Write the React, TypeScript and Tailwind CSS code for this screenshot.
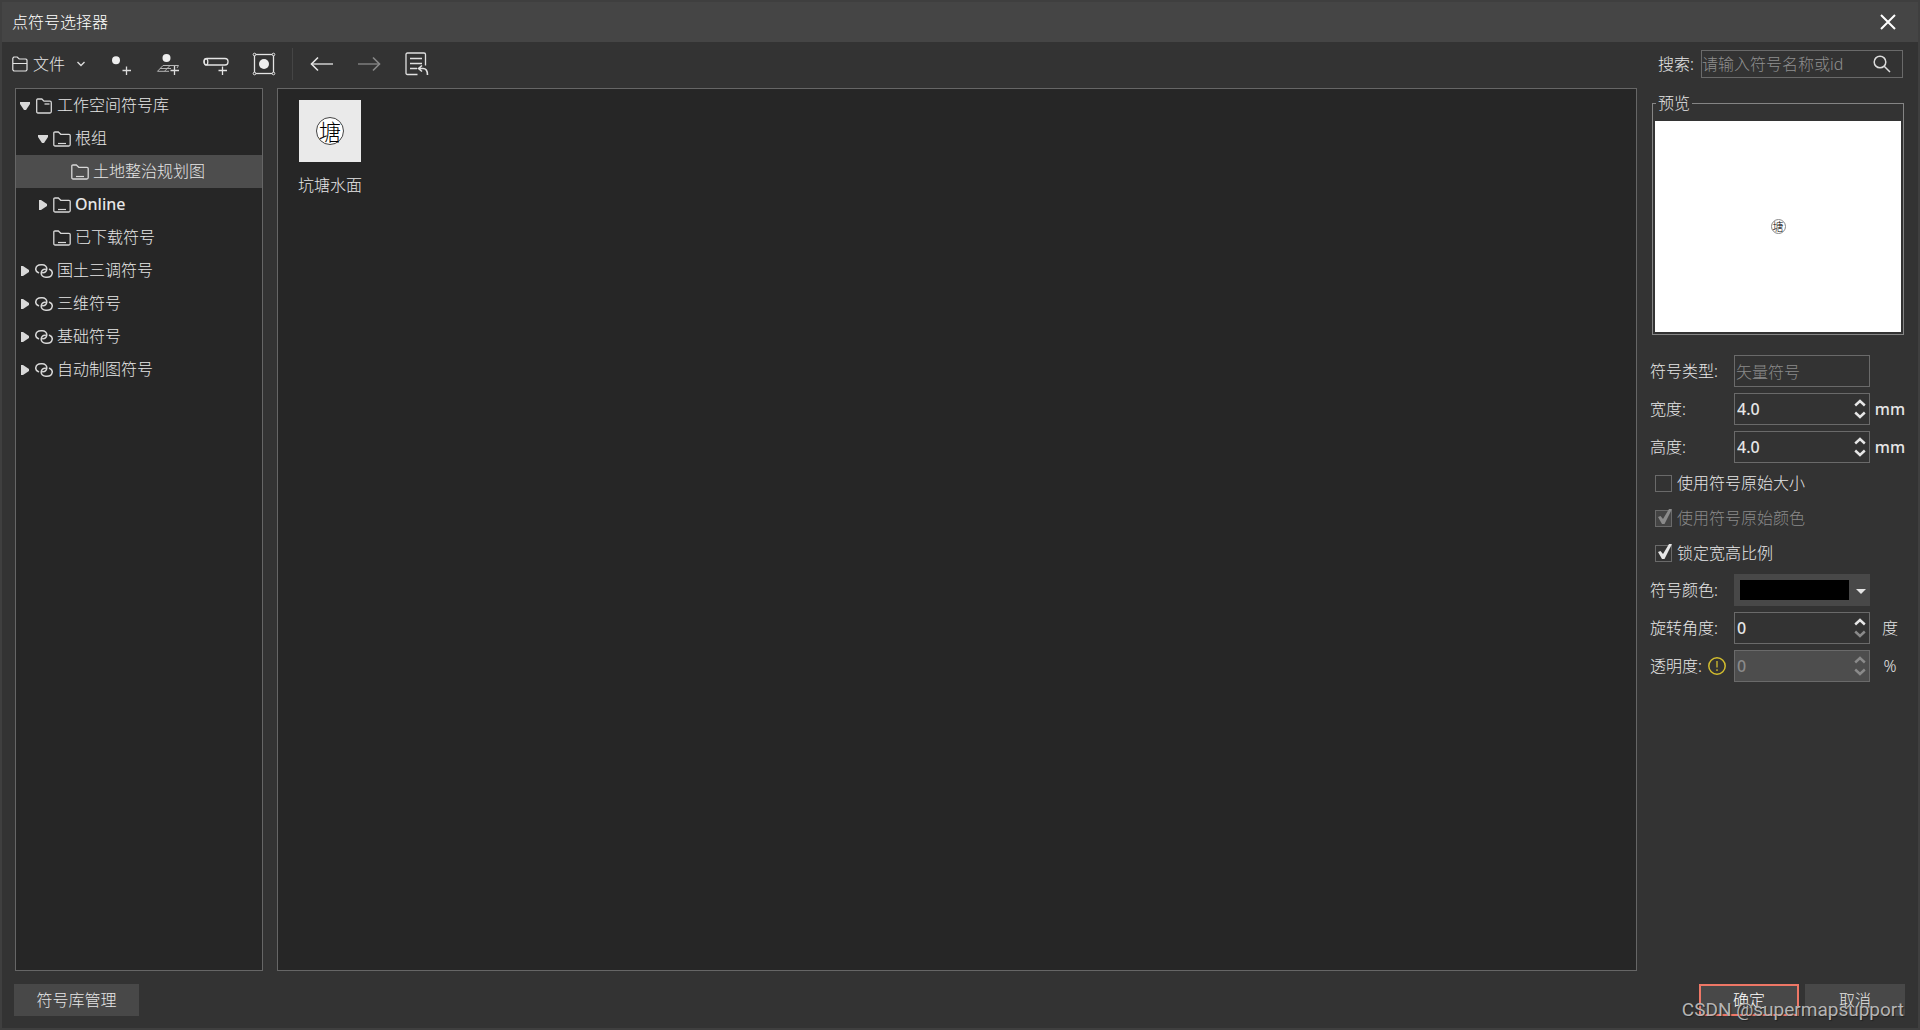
import * as React from "react";
import { cva } from "class-variance-authority";
import clsx from "clsx";

type IconProps = { className?: string };

// Icons
const FileMenuIcon = () => (
    <svg width="16" height="16" viewBox="0 0 16 16" fill="none" stroke="#e4e4e4" strokeWidth="1.2">
        <path d="M.8 13.8V2.2L1.8 1H5.2L7.2 3H14L15 4V13.8L14 15H1.8Z M1 7.5H15" />
    </svg>
);

const RootFolderIcon = () => (
    <svg width="16" height="16" viewBox="0 0 16 16" fill="none" stroke="#d8d8d8">
        <path d="M.7 13.5V2.2Q.7 1 1.7 1H5.8L8 3.2H14Q15.3 3.2 15.3 4.7V13.5Q15.3 15 14 15H2Q.7 15 .7 13.5Z" strokeWidth="1.3" />
        <path d="M8.5 6H13.5" strokeWidth="1.3" />
    </svg>
);

const FolderIcon = () => (
    <svg width="18" height="16" viewBox="0 0 18 16" fill="none" stroke="#d8d8d8">
        <path d="M.8 13.5V2.2Q.8 1 2 1H5.3L7.8 3.3H16Q17.2 3.3 17.2 4.5V13.5Q17.2 15 15.8 15H2.2Q.8 15 .8 13.5Z" strokeWidth="1.3" />
        <path d="M5 12.5H13" strokeWidth="1.2" />
    </svg>
);

const LinkIcon = () => (
    <svg width="18" height="14" viewBox="0 0 18 14" fill="none" stroke="#d8d8d8" strokeWidth="1.5" strokeLinecap="round">
        <path d="M3.5 8.8C1.5 8 .5 6.6 .8 4.7C1.2 2.2 3.4.8 6 .8H7.2C9.9.8 12 2.5 11.8 5C11.6 7.5 9.8 8.9 7.6 8.7" />
        <path d="M14.5 5.2C16.5 6 17.5 7.4 17.2 9.3C16.8 11.8 14.6 13.2 12 13.2H10.8C8.1 13.2 6 11.5 6.2 9C6.4 6.5 8.2 5.1 10.4 5.3" />
    </svg>
);

const PointAddIcon = () => (
    <svg width="28" height="28" viewBox="0 0 28 28" fill="none" stroke="#dcdcdc">
        <circle cx="10" cy="10.3" r="4" fill="#eee" stroke="none" />
        <path d="M16.5 20.5H25M20.5 16.5V25" strokeWidth="1.3" />
    </svg>
);

const Point3DAddIcon = () => (
    <svg width="28" height="28" viewBox="0 0 28 28" fill="none" stroke="#b4b4b4">
        <circle cx="12.5" cy="8" r="4" fill="#eee" stroke="none" />
        <path d="M9 15.5H24.5M3.5 21.3H15M9 15.5L3.5 21.3M16 15.5L10.5 21.3M6 18.5H17M24.5 15.5L23 18" />
        <path d="M16.5 20.5H25M20.5 16V25" stroke="#dcdcdc" strokeWidth="1.3" />
    </svg>
);

const PipeAddIcon = () => (
    <svg width="28" height="28" viewBox="0 0 28 28" fill="none" stroke="#e4e4e4" strokeWidth="1.3">
        <rect x="2" y="8.5" width="24" height="6.5" rx="3" />
        <ellipse cx="4" cy="11.8" rx="1.8" ry="3.2" />
        <path d="M16.5 20.5H25M20.5 16.5V25" />
    </svg>
);

const SymbolFrameIcon = () => (
    <svg width="28" height="28" viewBox="0 0 28 28" fill="#333" stroke="#e4e4e4">
        <rect x="4.5" y="4.5" width="19" height="19" strokeWidth="1.3" />
        <circle cx="14" cy="14" r="5" fill="#eee" stroke="none" />
        <circle cx="4.5" cy="4.5" r="1.3" />
        <circle cx="23.5" cy="4.5" r="1.3" />
        <circle cx="4.5" cy="23.5" r="1.3" />
        <circle cx="23.5" cy="23.5" r="1.3" />
    </svg>
);

const ArrowIcon = ({ className }: IconProps) => (
    <svg className={className} width="28" height="28" viewBox="0 0 28 28" fill="none" stroke="currentColor">
        <path d="M10 7.5L3.5 14L10 20.5" strokeWidth="1.6" />
        <path d="M3.5 14H25" strokeWidth="1.3" />
    </svg>
);

const HistoryListIcon = () => (
    <svg width="28" height="28" viewBox="0 0 28 28" fill="none" stroke="#e0e0e0" strokeWidth="1.3">
        <path d="M15.5 24.5H5.5Q4 24.5 4 23V4.5Q4 3 5.5 3H22Q23.5 3 23.5 4.5V15.5" />
        <path d="M8 8.5H20M8 13.5H20M8 18.5H15" />
        <path d="M20 15.5L16.5 18.5L20 21.5M16.5 18.5H21Q25.5 18.5 25.5 25" strokeWidth="1.6" />
    </svg>
);

const SearchIcon = () => (
    <svg width="18" height="18" viewBox="0 0 18 18" fill="none" stroke="#dcdcdc" strokeWidth="1.5">
        <circle cx="7" cy="7" r="5.8" />
        <path d="M11.2 11.2L17 17" />
    </svg>
);

const Chevron = ({ className }: IconProps) => (
    <svg className={className} width="12" height="8" viewBox="0 0 12 8" fill="none" stroke="currentColor" strokeWidth="2.4">
        <path d="M1.2 6.5L6 2L10.8 6.5" />
    </svg>
);

interface TreeItem {
    label: string;
    level: 0 | 1 | 2;
    icon: "root" | "folder" | "link";
    state?: "open" | "closed";
    selected?: boolean;
}

const treeItems: TreeItem[] = [
    { label: "工作空间符号库", level: 0, icon: "root", state: "open" },
    { label: "根组", level: 1, icon: "folder", state: "open" },
    { label: "土地整治规划图", level: 2, icon: "folder", selected: true },
    { label: "Online", level: 1, icon: "folder", state: "closed" },
    { label: "已下载符号", level: 1, icon: "folder" },
    { label: "国土三调符号", level: 0, icon: "link", state: "closed" },
    { label: "三维符号", level: 0, icon: "link", state: "closed" },
    { label: "基础符号", level: 0, icon: "link", state: "closed" },
    { label: "自动制图符号", level: 0, icon: "link", state: "closed" },
];

const treeIcons = {
    root: <RootFolderIcon />,
    folder: <FolderIcon />,
    link: <LinkIcon />,
};

const treeRow = cva("flex h-[33px] w-full items-center text-left", {
    variants: {
        level: { 0: "pl-1", 1: "pl-[22px]", 2: "pl-10" },
        selected: { true: "bg-[#4d4d4d]", false: "" },
    },
});

function TreeRow({ item }: { item: TreeItem }) {
    return (
        <li>
            <button className={treeRow({ level: item.level, selected: !!item.selected })}>
                <span className="flex w-2.5 justify-center text-[#d8d8d8]">
                    {item.state === "open" && (
                        <svg width="10" height="8" viewBox="0 0 10 8" fill="currentColor">
                            <path d="M0 0H10V2L6 8H4L0 2Z" />
                        </svg>
                    )}
                    {item.state === "closed" && (
                        <svg width="8" height="10" viewBox="0 0 8 10" fill="currentColor">
                            <path d="M0 0H2L8 4V6L2 10H0Z" />
                        </svg>
                    )}
                </span>
                <span className="ml-[5px] flex w-[18px] justify-center">{treeIcons[item.icon]}</span>
                <span className={clsx("ml-1 pb-0.5", item.label === "Online" && "font-medium")}>{item.label}</span>
            </button>
        </li>
    );
}

function Field({
    id,
    label,
    unit,
    warning,
    children,
}: {
    id: string;
    label: string;
    unit?: string;
    warning?: boolean;
    children: React.ReactNode;
}) {
    return (
        <div className="flex h-8 items-center">
            <label htmlFor={id} className="flex w-[84px] shrink-0 items-center gap-1.5">
                {label}
                {warning && (
                    <svg width="18" height="18" viewBox="0 0 18 18" fill="none" stroke="#d2bd2e" strokeWidth="1.5">
                        <circle cx="9" cy="9" r="8.2" />
                        <path d="M9 4V10.5M9 12.3V14" strokeWidth="1.3" />
                    </svg>
                )}
            </label>
            {children}
            <span className={clsx("ml-1 flex flex-1 justify-center", unit === "mm" && "font-medium")}>{unit}</span>
        </div>
    );
}

interface SpinBoxProps {
    id: string;
    defaultValue: string;
    disabled?: boolean;
    atMin?: boolean;
}

function SpinBox({ id, defaultValue, disabled, atMin }: SpinBoxProps) {
    return (
        <div
            className={clsx(
                "flex h-8 w-[136px] shrink-0 items-center border border-[#6a6a6a]",
                disabled ? "bg-[#4d4d4d] text-[#8a8a8a]" : "bg-[#333]"
            )}
        >
            <input
                id={id}
                type="text"
                defaultValue={defaultValue}
                disabled={disabled}
                className="w-0 flex-1 bg-transparent pl-0.5 font-medium outline-none"
            />
            <div className="mr-[3px] flex flex-col gap-1">
                <button aria-label="增加" disabled={disabled}>
                    <Chevron className="block" />
                </button>
                <button aria-label="减少" disabled={disabled || atMin} className={clsx(atMin && "text-[#8a8a8a]")}>
                    <Chevron className="block rotate-180" />
                </button>
            </div>
        </div>
    );
}

function CheckOption({
    label,
    checked,
    disabled,
}: {
    label: string;
    checked?: boolean;
    disabled?: boolean;
}) {
    return (
        <label className={clsx("flex h-[35px] items-center gap-[5px]", disabled && "text-[#8a8a8a]")}>
            <span className="relative h-[17px] w-[17px]">
                <input
                    type="checkbox"
                    defaultChecked={checked}
                    disabled={disabled}
                    className="peer block h-[17px] w-[17px] appearance-none border border-[#6a6a6a] disabled:bg-[#444]"
                />
                <svg
                    className="pointer-events-none absolute bottom-[3px] left-[3px] hidden peer-checked:block"
                    width="14"
                    height="15"
                    viewBox="0 0 14 15"
                    fill="currentColor"
                >
                    <path d="M0 8L2.5 7L5 10L11 0H14L6.5 15H4Z" />
                </svg>
            </span>
            <span className="pb-0.5">{label}</span>
        </label>
    );
}

export default function App() {
    return (
        <div className="relative flex h-screen flex-col border-2 border-[#3f3f3f] bg-[#333] font-['Noto_Sans','Noto_Sans_CJK_SC',sans-serif] text-base leading-5 font-light text-[#e6e6e6]">
            <header className="flex h-10 shrink-0 items-center justify-between bg-[#454545] pr-5 pl-2.5 text-white">
                <h1>点符号选择器</h1>
                <button aria-label="关闭">
                    <svg width="20" height="20" viewBox="0 0 20 20" stroke="#fff" strokeWidth="2">
                        <path d="M3 3L17 17M17 3L3 17" />
                    </svg>
                </button>
            </header>

            <div className="flex h-[46px] shrink-0 items-center justify-between pr-[15px] pb-0.5 pl-2.5">
                <div className="flex items-center">
                    <button className="flex items-center">
                        <FileMenuIcon />
                        <span className="ml-[5px]">文件</span>
                        <svg className="ml-[11px]" width="10" height="8" viewBox="0 0 10 8" fill="none" stroke="#dcdcdc" strokeWidth="1.4">
                            <path d="M1.5 2L5 5.5L8.5 2" />
                        </svg>
                    </button>
                    <div className="ml-5 flex items-center gap-5">
                        <button aria-label="新建二维点符号">
                            <PointAddIcon />
                        </button>
                        <button aria-label="新建三维点符号">
                            <Point3DAddIcon />
                        </button>
                        <button aria-label="新建管点符号">
                            <PipeAddIcon />
                        </button>
                        <button aria-label="编辑符号">
                            <SymbolFrameIcon />
                        </button>
                    </div>
                    <div className="mr-[15px] ml-3.5 h-8 w-px bg-[#454545]" />
                    <div className="flex items-center gap-[19px]">
                        <button aria-label="后退">
                            <ArrowIcon />
                        </button>
                        <button aria-label="前进" disabled>
                            <ArrowIcon className="rotate-180 text-[#888]" />
                        </button>
                        <button aria-label="历史记录">
                            <HistoryListIcon />
                        </button>
                    </div>
                </div>
                <div className="flex items-center gap-[7px]">
                    <label htmlFor="search">搜索:</label>
                    <div className="flex h-7 w-[202px] items-center border border-[#6a6a6a] pr-[11px]">
                        <input
                            id="search"
                            type="text"
                            placeholder="请输入符号名称或id"
                            className="w-0 flex-1 bg-transparent outline-none placeholder:text-[#8f8f8f]"
                        />
                        <button aria-label="搜索">
                            <SearchIcon />
                        </button>
                    </div>
                </div>
            </div>

            <main className="flex min-h-0 flex-1 pl-[13px]">
                <nav className="w-[248px] shrink-0 border border-[#666] bg-[#262626]">
                    <ul>
                        {treeItems.map((item) => (
                            <TreeRow key={item.label} item={item} />
                        ))}
                    </ul>
                </nav>

                <section className="ml-3.5 flex flex-1 items-start border border-[#666] bg-[#262626] px-5 py-[11px]">
                    <button className="flex flex-col items-center gap-[13px]">
                        <span className="flex h-[62px] w-[62px] items-center justify-center bg-[#eaeaea]">
                            <span className="flex h-7 w-7 items-center justify-center rounded-full border border-[#444] bg-white text-[22px] leading-7 text-black">
                                塘
                            </span>
                        </span>
                        <span>坑塘水面</span>
                    </button>
                </section>

                <aside className="w-[281px] shrink-0 pt-[5px] pr-3 pl-[13px]">
                    <fieldset className="mx-0.5 border border-[#858585] px-0.5 pt-2 pb-0.5">
                        <legend className="ml-px px-0.5">预览</legend>
                        <div className="flex h-[211px] items-center justify-center bg-white">
                            <span className="flex h-[15px] w-[15px] items-center justify-center rounded-full border border-[#888] text-[11px] text-black">
                                塘
                            </span>
                        </div>
                    </fieldset>

                    <div className="mt-5 flex flex-col gap-1.5">
                        <Field id="symbol-type" label="符号类型:">
                            <input
                                id="symbol-type"
                                type="text"
                                defaultValue="矢量符号"
                                disabled
                                className="h-8 w-[136px] shrink-0 border border-[#6a6a6a] bg-transparent pl-px text-[#8a8a8a]"
                            />
                        </Field>
                        <Field id="width" label="宽度:" unit="mm">
                            <SpinBox id="width" defaultValue="4.0" />
                        </Field>
                        <Field id="height" label="高度:" unit="mm">
                            <SpinBox id="height" defaultValue="4.0" />
                        </Field>
                    </div>

                    <div className="my-[3px] pl-[5px]">
                        <CheckOption label="使用符号原始大小" />
                        <CheckOption label="使用符号原始颜色" checked disabled />
                        <CheckOption label="锁定宽高比例" checked />
                    </div>

                    <div className="flex flex-col gap-1.5">
                        <Field id="symbol-color" label="符号颜色:">
                            <div className="relative h-8 w-[136px] shrink-0">
                                <select
                                    id="symbol-color"
                                    defaultValue="#000000"
                                    className="h-full w-full appearance-none bg-[#484848] text-transparent"
                                >
                                    <option value="#000000" aria-label="黑色" />
                                </select>
                                <span className="pointer-events-none absolute top-1.5 left-1.5 h-5 w-[109px] bg-black" />
                                <svg
                                    className="pointer-events-none absolute top-[15px] right-1"
                                    width="10"
                                    height="5"
                                    viewBox="0 0 10 5"
                                    fill="#e4e4e4"
                                >
                                    <path d="M0 0H10L5 5Z" />
                                </svg>
                            </div>
                        </Field>
                        <Field id="rotation" label="旋转角度:" unit="度">
                            <SpinBox id="rotation" defaultValue="0" atMin />
                        </Field>
                        <Field id="opacity" label="透明度:" unit="%" warning>
                            <SpinBox id="opacity" defaultValue="0" disabled />
                        </Field>
                    </div>
                </aside>
            </main>

            <footer className="flex shrink-0 justify-between pt-[13px] pr-[13px] pb-3 pl-3">
                <button className="h-8 w-[125px] bg-[#484848]">符号库管理</button>
                <div className="flex gap-1.5">
                    <button className="h-8 w-[100px] border-2 border-[#ee7766] bg-[#484848] text-white">确定</button>
                    <button className="h-8 w-[100px] bg-[#484848]">取消</button>
                </div>
            </footer>

            <span className="pointer-events-none absolute right-3.5 bottom-1.5 font-['Roboto',sans-serif] text-[19px] leading-6 font-normal text-[#b4b4b4] [text-shadow:1px_1px_1px_#222]">
                CSDN @supermapsupport
            </span>
        </div>
    );
}
